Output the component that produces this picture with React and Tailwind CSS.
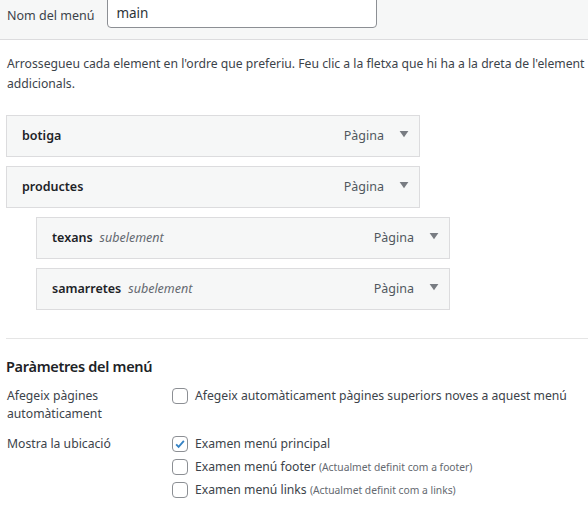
const items = [
    { title: "botiga", sub: false },
    { title: "productes", sub: false },
    { title: "texans", sub: true },
    { title: "samarretes", sub: true },
];

const Checkbox = ({ checked }) => (
    <span className="w-4 h-4 shrink-0 rounded-[4px] border border-[#8c8f94] bg-white flex items-center justify-center">
        {checked && (
            <svg viewBox="0 0 20 20" className="w-[18px] h-[18px]">
                <path d="M4.5 10.5 L8 14 L15.5 5.5" fill="none" stroke="#3582c4" strokeWidth="2.6" />
            </svg>
        )}
    </span>
);

const MenuItem = ({ title, sub }) => (
    <div className={`${sub ? "ml-[36px]" : "ml-[6px]"} w-[414px] h-[42px] mb-[9px] border border-[#dcdcde] bg-[#f6f7f7] flex items-center pl-[15px] pr-[10px]`}>
        <span className="font-semibold text-[#1d2327]">{title}</span>
        {sub && <span className="italic text-[#646970] ml-[7px]">subelement</span>}
        <span className="ml-auto text-[#50575e]">Pàgina</span>
        <svg viewBox="0 0 10 8" className="w-[10px] h-[7px] ml-[15px] -mt-[3px]">
            <path d="M0 0 L10 0 L5 7 Z" fill="#787c82" />
        </svg>
    </div>
);

export default function App() {
    return (
        <div className="w-[588px] h-[517px] bg-white overflow-hidden text-[12.2px] text-[#3c434a]" style={{ fontFamily: '"Noto Sans", "Open Sans", sans-serif' }}>
            <div className="h-[40px] bg-[#f6f7f7] border-b border-[#dcdcde] flex items-start">
                <span className="ml-[7px] mt-[7px] text-[12.5px] text-[#3c434a]">Nom del menú</span>
                <div className="ml-[13px] -mt-[4px] w-[270px] h-[32px] border border-[#8c8f94] rounded-[4px] bg-white flex items-end pb-[4px] px-[8px] text-[13.5px] text-[#2c3338]">
                    main
                </div>
            </div>
            <p className="px-[7px] pt-[14px] leading-[20px] text-[#3c434a] whitespace-nowrap">
                Arrossegueu cada element en l'ordre que preferiu. Feu clic a la fletxa que hi ha a la dreta de l'element
                <br />
                addicionals.
            </p>
            <div className="pt-[21px] text-[12.5px]">
                {items.map((it) => (
                    <MenuItem key={it.title} {...it} />
                ))}
            </div>
            <div className="ml-[6px] mt-[28px] border-t border-[#e5e5e5]" />
            <h3 className="mx-[6px] mt-[16px] text-[14.5px] tracking-[-0.3px] font-semibold text-[#1d2327] leading-[22px]">Paràmetres del menú</h3>
            <div className="mt-[10px] flex px-[7px]">
                <div className="w-[165px] leading-[18px]">
                    Afegeix pàgines<br />automàticament
                </div>
                <label className="flex items-center gap-[7px] h-[18px]">
                    <Checkbox />
                    <span>Afegeix automàticament pàgines superiors noves a aquest menú</span>
                </label>
            </div>
            <div className="mt-[12px] flex px-[7px]">
                <div className="w-[165px] leading-[18px]">Mostra la ubicació</div>
                <div className="flex flex-col gap-[5px]">
                    <label className="flex items-center gap-[7px] h-[18px]">
                        <Checkbox checked />
                        <span>Examen menú principal</span>
                    </label>
                    <label className="flex items-center gap-[7px] h-[18px]">
                        <Checkbox />
                        <span>
                            Examen menú footer <span className="text-[10.3px] text-[#646970]">(Actualmet definit com a footer)</span>
                        </span>
                    </label>
                    <label className="flex items-center gap-[7px] h-[18px]">
                        <Checkbox />
                        <span>
                            Examen menú links <span className="text-[10.3px] text-[#646970]">(Actualmet definit com a links)</span>
                        </span>
                    </label>
                </div>
            </div>
        </div>
    );
}
